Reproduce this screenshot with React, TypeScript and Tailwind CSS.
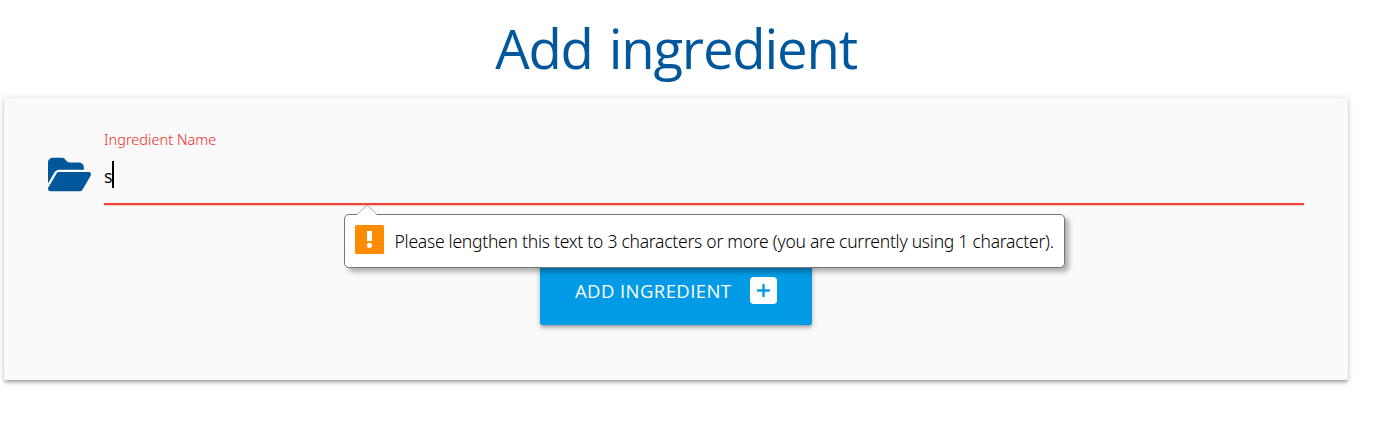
import { FaFolderOpen } from "react-icons/fa6";

function ValidationBubble() {
  return (
    <div
      role="alert"
      className="absolute top-[9px] left-[240px] z-10 flex h-[54px] w-[721px] items-center rounded-[5px] border border-[#767676] bg-white pl-[10px] shadow-[4px_4px_5px_rgba(0,0,0,0.3)]"
    >
      <svg className="absolute -top-[10px] left-[11px]" width="22" height="11" viewBox="0 0 22 11">
        <path d="M1 11V9.5L11 0L21 9.5V11Z" fill="#fff" />
        <path d="M1 9.5L11 0L21 9.5" fill="none" stroke="#a9a9a9" />
      </svg>
      <svg className="-mt-[3px] shrink-0" width="29" height="29" viewBox="0 0 29 29">
        <rect width="29" height="29" rx="1.5" fill="#ff8c00" />
        <path d="M12 6H17V16H12Z" fill="#fff" />
        <circle cx="14.5" cy="20.3" r="2.6" fill="#fff" />
      </svg>
      <span className="ml-[10.5px] font-['Noto_Sans','Open_Sans',sans-serif] text-[17.5px] leading-6 font-[350] tracking-[-0.25px] whitespace-nowrap text-black">
        Please lengthen this text to 3 characters or more (you are currently using 1 character).
      </span>
    </div>
  );
}

function SquarePlus() {
  return (
    <svg className="-mt-[2px] shrink-0" width="27" height="27" viewBox="0 0 27 27">
      <rect width="27" height="27" rx="3.8" fill="#fff" />
      <path d="M13.5 8V19M8 13.5H19" fill="none" stroke="#039be5" strokeWidth="2.4" strokeLinecap="round" />
    </svg>
  );
}

export default function App() {
  return (
    <main className="h-[431px] overflow-hidden bg-white pl-1 font-['Open_Sans','Noto_Sans',sans-serif]">
      <div className="w-[1344px]">
        <h1 className="h-[98px] pt-[11px] text-center text-[54.5px] leading-[74px] tracking-[-1.2px] text-[#01579b] [word-spacing:3px]">
          Add ingredient
        </h1>
        <form className="flex h-[282px] flex-col rounded-[2.5px] bg-[#fafafa] px-11 pt-[31px] shadow-[0_2.5px_2.5px_0_rgba(0,0,0,0.14),0_3.75px_1.25px_-2.5px_rgba(0,0,0,0.12),0_1.25px_6.25px_0_rgba(0,0,0,0.2)]">
          <div className="flex h-[76px]">
            <FaFolderOpen className="mt-[24px] h-[43px] w-[43px] shrink-0 text-[#01579b]" />
            <div className="relative ml-[13px] h-[76px] flex-1 border-b-2 border-[#f44336] shadow-[0_1px_0_0_rgba(244,67,54,0.25)]">
              <label className="block h-[22px] font-['Noto_Sans','Open_Sans',sans-serif] text-[14.5px] leading-[20px] font-[350] tracking-[0.02px] text-[#f4281a]">
                Ingredient Name
              </label>
              <div className="mt-[10px] flex h-[27px] items-center text-[18px] text-black">
                <span className="w-2 pt-[2px] leading-6">s</span>
                <span className="h-[27px] w-0.5 bg-black" />
              </div>
              <div className="absolute top-[76px] left-0">
                <ValidationBubble />
              </div>
            </div>
          </div>
          <button
            type="button"
            className="mt-[53px] flex h-[67px] w-[272px] items-center self-center rounded-[2.5px] bg-[#039be5] pl-[35px] text-white shadow-[0_2.5px_2.5px_0_rgba(0,0,0,0.14),0_3.75px_1.25px_-2.5px_rgba(0,0,0,0.12),0_1.25px_6.25px_0_rgba(0,0,0,0.2)]"
          >
            <span className="-mt-[2px] w-[175px] text-left text-[18.5px] leading-7 tracking-[0.42px] whitespace-nowrap">ADD INGREDIENT</span>
            <SquarePlus />
          </button>
        </form>
      </div>
    </main>
  );
}
